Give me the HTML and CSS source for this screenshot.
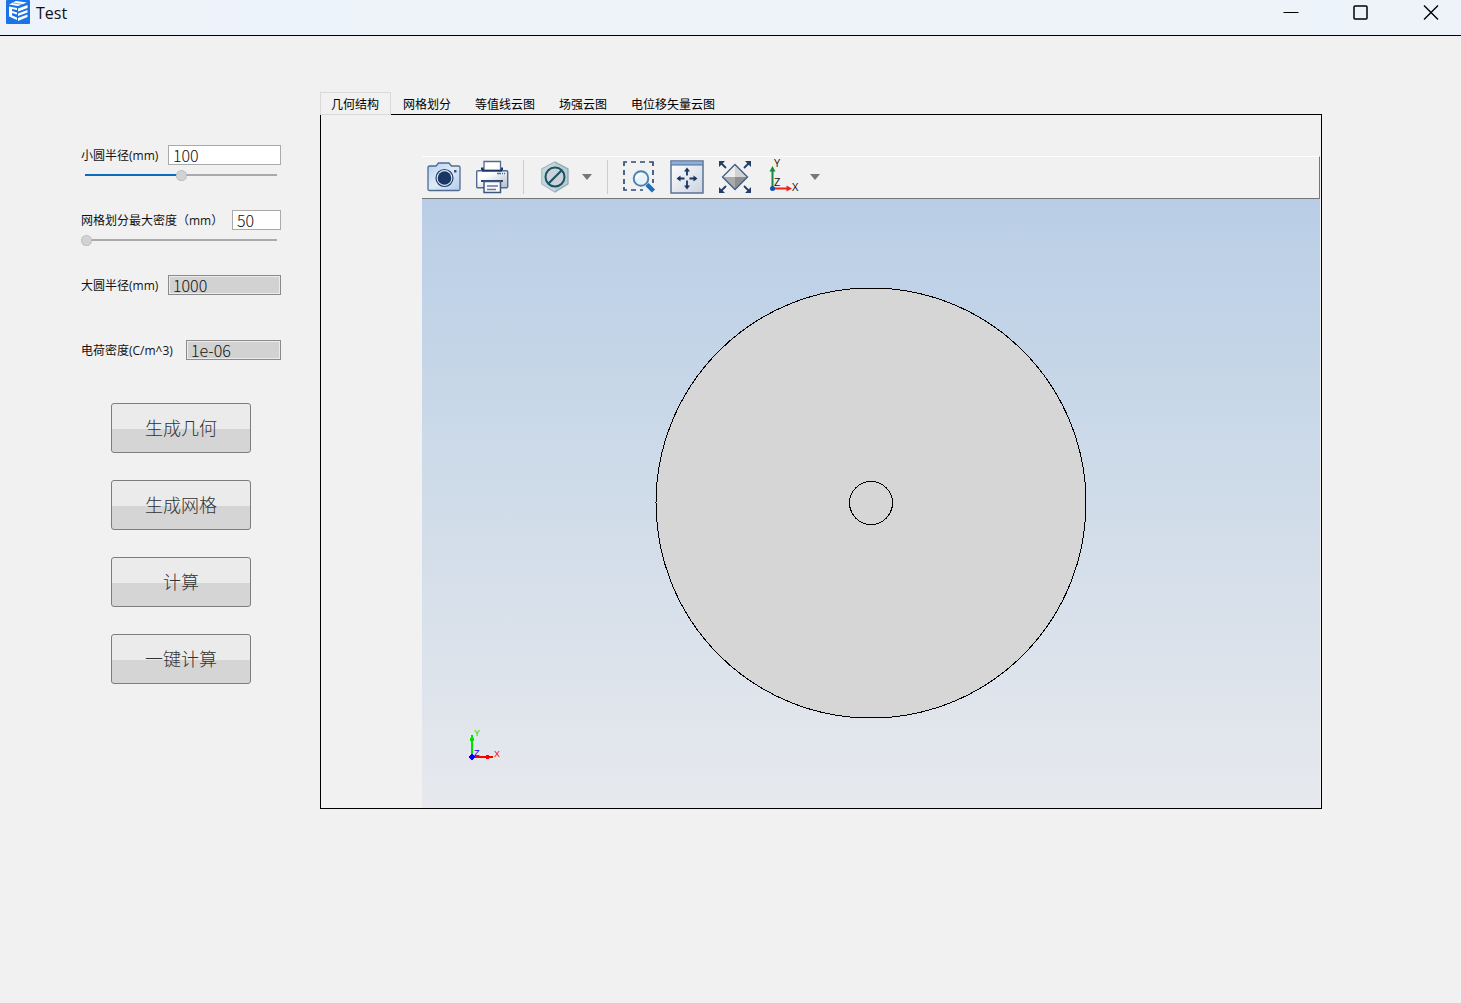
FILE: index.html
```html
<!DOCTYPE html>
<html lang="zh-CN">
<head>
<meta charset="utf-8">
<title>Test</title>
<link rel="stylesheet" href="styles.css">
</head>
<body>
<header class="titlebar">
  <svg class="app-icon" viewBox="0 0 24 24" aria-hidden="true">
    <rect width="24" height="24" rx="1" fill="#1b73e8"/>
    <path d="M3 4.500 10 1 21 2.500 12 6Z" fill="#fff"/>
    <path d="M3 6.500 11 8V10L6 9V11L11 12.500V14.500L6 13V15.500L11 17.500V20L3 16.500Z" fill="#fff"/>
    <path d="M12 8.500 21.500 5V8L12 11.500ZM12 13.500 21.500 10V12.500L12 16ZM12 18 21.500 14.500V17L12 21Z" fill="#fff"/>
    <path d="M7 3 17 4.500" stroke="#1b73e8" stroke-width=".6"/>
  </svg>
  <h1 class="title">Test</h1>
  <div class="window-controls">
    <button class="window-button" type="button" aria-label="最小化"><svg viewBox="0 0 16 24"><path d="M0.500 12.500H15.500"/></svg></button>
    <button class="window-button" type="button" aria-label="最大化"><svg viewBox="0 0 16 24"><rect x="1" y="6" width="13" height="13" rx="1" stroke-width="1.500"/></svg></button>
    <button class="window-button" type="button" aria-label="关闭"><svg viewBox="0 0 16 24"><path d="M1 5.500 15 19.500M15 5.500 1 19.500" stroke-width="1.400"/></svg></button>
  </div>
</header>
<main class="workspace">
  <form class="sidebar">
    <div class="fields">
      <div class="field">
        <div class="field-row"><label for="inner">小圆半径(mm)</label><input class="value" id="inner" type="text" value="100"></div>
        <input class="slider slider-half" type="range" min="0" max="200" value="101" aria-label="小圆半径">
      </div>
      <div class="field">
        <div class="field-row"><label for="mesh">网格划分最大密度（mm）</label><input class="value value-short" id="mesh" type="text" value="50"></div>
        <input class="slider" type="range" min="50" max="200" value="50" aria-label="网格划分最大密度">
      </div>
      <div class="field">
        <div class="field-row"><label for="outer">大圆半径(mm)</label><input class="value" id="outer" type="text" value="1000" readonly></div>
      </div>
      <div class="field">
        <div class="field-row"><label for="charge">电荷密度(C/m^3)</label><input class="value value-medium" id="charge" type="text" value="1e-06" readonly></div>
      </div>
    </div>
    <div class="actions">
      <button class="action" type="button">生成几何</button>
      <button class="action" type="button">生成网格</button>
      <button class="action" type="button">计算</button>
      <button class="action" type="button">一键计算</button>
    </div>
  </form>
  <section class="results">
    <div class="tabs" role="tablist">
      <button class="tab tab-active" type="button" role="tab" aria-selected="true">几何结构</button>
      <button class="tab" type="button" role="tab">网格划分</button>
      <button class="tab" type="button" role="tab">等值线云图</button>
      <button class="tab" type="button" role="tab">场强云图</button>
      <button class="tab" type="button" role="tab">电位移矢量云图</button>
    </div>
    <div class="panel" role="tabpanel">
      <div class="viewer">
        <div class="toolbar" role="toolbar">
          <button class="tool" type="button" aria-label="截图"><svg viewBox="0 0 34 34">
            <defs><linearGradient id="cam" x2="1" y2="1"><stop offset="0" stop-color="#b2d0ef"/><stop offset=".5" stop-color="#dfeaf7"/><stop offset="1" stop-color="#b2cce9"/></linearGradient></defs>
            <path d="M2.500 6H9L11.500 3H22L24.500 6H31.500Q33 6 33 7.500V29Q33 30.500 31.500 30.500H2.500Q1 30.500 1 29V7.500Q1 6 2.500 6Z" fill="url(#cam)" stroke="#526b92" stroke-width="1.300"/>
            <circle cx="17.500" cy="18" r="8.500" fill="#e5edf6" stroke="#223f70" stroke-width="1.200"/><circle cx="17.500" cy="18" r="6.800" fill="#193563"/><rect x="27" y="10" width="2.500" height="2.500" fill="#38547f"/></svg></button>
          <button class="tool" type="button" aria-label="打印"><svg viewBox="0 0 34 34">
            <defs><linearGradient id="prn" x2="1" y2="1"><stop offset=".3" stop-color="#fff"/><stop offset="1" stop-color="#b0bac9"/></linearGradient></defs>
            <path d="M6 7.500H28V11H6Z" fill="#193563"/><path d="M9 1.500H25.500V10.500H9Z" fill="#fff" stroke="#526b92" stroke-width="1.300"/>
            <rect x="1.700" y="10.700" width="31" height="17" rx="1" fill="url(#prn)" stroke="#526b92" stroke-width="1.400"/><path d="M7 10.700H27" stroke="#193563" stroke-width="1.800"/>
            <path d="M6 21H28" stroke="#193563" stroke-width="1.800"/><path d="M9 21.500H25.500V32.500H9Z" fill="#f7f9fc" stroke="#3e577f" stroke-width="1.500"/><path d="M12 26H23M12 29.500H21" stroke="#687892" stroke-width="1.500"/><path d="M22 13.500H30" stroke="#526b92" stroke-width="1.500" stroke-dasharray="4 1 1 1"/></svg></button>
          <span class="separator"></span>
          <div class="split">
            <button class="tool" type="button" aria-label="隐藏"><svg viewBox="0 0 34 34">
              <path d="M17 2 30 9V24L17 32 4 24V9Z" fill="#b9ccd2" stroke="#8fa9b3" stroke-width="1.300"/><path d="M17 2V32L4 24V9Z" fill="#cbdce0" opacity=".7"/><circle cx="17" cy="17" r="9.500" fill="#cbd2d8" stroke="#195264" stroke-width="2"/><path d="M10.500 23.500 23.500 10.500" stroke="#195264" stroke-width="2.200"/></svg></button>
            <button class="drop" type="button" aria-label="显示选项"><svg viewBox="0 0 12 8"><path d="M1 1H11L6 7Z" fill="#777"/></svg></button>
          </div>
          <span class="separator"></span>
          <button class="tool" type="button" aria-label="框选缩放"><svg viewBox="0 0 34 34" fill="none">
            <path d="M2 6V2H5M9 2H14M18 2H23M27 2H31V6M2 10V15M2 19V24M2 27V30H5M31 10V15M31 19V23M9 30H14M18 30H21" stroke="#304b78" stroke-width="1.700"/><path d="M25 24.500 31.500 31" stroke="#1d70b6" stroke-width="4.500"/><circle cx="19" cy="18.500" r="7.300" fill="#e8f2fb" stroke="#4682b3" stroke-width="1.900"/><path d="M15 18.500Q15 14 19.500 14" stroke="#fff" stroke-width="2"/></svg></button>
          <button class="tool" type="button" aria-label="平移"><svg viewBox="0 0 34 34">
            <defs><linearGradient id="pan" x2="1" y2="1"><stop offset="0" stop-color="#fff"/><stop offset="1" stop-color="#cbd3e0"/></linearGradient></defs>
            <rect x="1" y="1" width="32" height="32" fill="url(#pan)" stroke="#5a7198" stroke-width="1.500"/><path d="M2 1.800H32V5H2Z" fill="#8faed4"/><path d="M1 5H33" stroke="#526b92"/>
            <path d="M17 9V15.500M17 20.500V28M8 18.500H14.500M19.500 18.500H26" stroke="#193563" stroke-width="1.800"/><path d="M17 7.500 20 11.500H14ZM17 29.500 20 25.500H14ZM6.500 18.500 10.500 15.500V21.500ZM27.500 18.500 23.500 15.500V21.500Z" fill="#193563"/></svg></button>
          <button class="tool" type="button" aria-label="适应窗口"><svg viewBox="0 0 34 34">
            <path d="M17 4.500 29.500 17 17 29.500 4.500 17Z" fill="#ededed"/><path d="M17 4.500 29.500 17H17Z" fill="#d2d2d2"/><path d="M4.500 17H17V29.500Z" fill="#aaa"/><path d="M17 17H29.500L17 29.500Z" fill="#8f8f8f"/><path d="M17 4.500 29.500 17 17 29.500 4.500 17Z" fill="none" stroke="#405b87" stroke-width="1.300"/>
            <path d="M3 3 8 8M31 3 26 8M3 31 8 26M31 31 26 26" stroke="#243e6a" stroke-width="1.800"/><path d="M1 1H7L1 7ZM33 1H27L33 7ZM1 33H7L1 27ZM33 33H27L33 27Z" fill="#243e6a"/></svg></button>
          <div class="split">
            <button class="tool" type="button" aria-label="视图方向"><svg viewBox="0 0 34 34">
              <path d="M6.500 28V10" stroke="#168b3d" stroke-width="2"/><path d="M6.500 6 9.500 11.500H3.500Z" fill="#168b3d"/><path d="M7 28.500H21" stroke="#ed251c" stroke-width="2"/><path d="M26 28.500 20.500 25.500V31.500Z" fill="#ed251c"/><circle cx="6.500" cy="28.500" r="2.500" fill="#194fae"/>
              <g class="axis-text"><text x="8" y="7">Y</text><text x="8" y="26">Z</text><text x="26" y="31">X</text></g></svg></button>
            <button class="drop" type="button" aria-label="视图选项"><svg viewBox="0 0 12 8"><path d="M1 1H11L6 7Z" fill="#777"/></svg></button>
          </div>
        </div>
        <div class="canvas">
          <svg class="geometry" viewBox="0 0 432 432" fill="#d6d6d6" stroke="#000" shape-rendering="crispEdges"><circle cx="216" cy="216" r="215"/><circle cx="216" cy="216" r="21.500"/></svg>
          <svg class="triad" viewBox="0 0 40 40">
            <g shape-rendering="crispEdges"><path d="M9 33V11H11V33Z" fill="#00e000"/><rect x="8" y="14" width="4" height="3" fill="#00e000"/><path d="M10 32H31V34H10Z" fill="red"/><rect x="24" y="31" width="3" height="4" fill="red"/><path d="M10 30 13 33 10 36 7 33Z" fill="#00f" stroke="#00f"/></g>
            <g class="triad-text"><text x="12" y="12" fill="#00e000">Y</text><text x="12" y="32" fill="#00f">Z</text><text x="32" y="33" fill="red">X</text></g>
          </svg>
        </div>
      </div>
    </div>
  </section>
</main>
</body>
</html>
```

FILE: styles.css
```css
* { box-sizing: border-box; }
body {
  margin: 0;
  min-height: 100vh;
  background: #f1f1f1;
  color: #111;
  font: 12px/22px "Open Sans", "Noto Sans CJK SC", sans-serif;
}
button, input { font: inherit; color: inherit; margin: 0; padding: 0; }
button { border: 0; background: none; }
svg { display: block; }

.titlebar {
  display: flex;
  align-items: flex-start;
  height: 36px;
  padding-left: 6px;
  border-bottom: 1px solid #000;
  background: linear-gradient(90deg, #eef3fb, #edf3f8 70%, #eef3fb);
}
.app-icon { width: 24px; height: 24px; }
.title { margin: 0 auto 0 6px; font-size: 16px; font-weight: 400; line-height: 26px; }
.window-controls { display: flex; gap: 10px; }
.window-button { display: flex; justify-content: center; width: 60px; }
.window-button svg { width: 16px; height: 24px; fill: none; stroke: #000; }

.workspace { display: flex; gap: 39px; padding: 56px 139px 56px 81px; }
.sidebar { flex: none; width: 200px; padding-top: 53px; }
.fields { display: flex; flex-direction: column; gap: 29px; }
.field { display: flex; flex-direction: column; gap: 5px; min-height: 36px; }
.field-row { display: flex; justify-content: space-between; height: 20px; white-space: nowrap; }
.value {
  width: 113px;
  padding: 0 0 0 4px;
  border: 1px solid #aaa;
  border-radius: 0;
  background: #fff;
  font: 300 16px/18px "Noto Sans CJK SC", sans-serif;
}
.value-medium { width: 95px; }
.value-short { width: 49px; }
.value:read-only { border-color: #8a8a8a; background: #d2d2d2; box-shadow: inset 0 0 0 1px #ececec; }
.slider {
  appearance: none;
  width: 100%;
  height: 11px;
  background: linear-gradient(#aaa, #aaa) center 4px / 192px 2px no-repeat;
}
.slider-half { background-image: linear-gradient(90deg, #0a6cbd 50%, #aaa 50%); }
.slider::-webkit-slider-thumb {
  appearance: none;
  width: 11px;
  height: 11px;
  border: 1px dotted #aaa;
  border-radius: 50%;
  background: #d2d2d2;
}

.actions { display: flex; flex-direction: column; gap: 27px; margin-top: 27px; padding: 0 30px; }
.action {
  height: 50px;
  padding-bottom: 3px;
  border: 1px solid #7d7d7d;
  border-radius: 3px;
  background: linear-gradient(#ebebeb 52%, #d5d5d5 52%);
  color: #333;
  font: 300 18px/24px "Noto Sans CJK SC", sans-serif;
}

.results { flex: 1; min-width: 0; }
.tabs { display: flex; gap: 1px; }
.tab {
  height: 23px;
  margin-bottom: -1px;
  padding: 1px 11px 0 10px;
  border: 1px solid transparent;
  color: #000;
  white-space: nowrap;
}
.tab-active { z-index: 1; border-color: #d9d9d9; background: #f1f1f1; }
.panel { padding: 41px 1px 0 101px; border: 1px solid #000; }
.toolbar {
  display: flex;
  align-items: center;
  gap: 14px;
  padding: 3px 0 4px 5px;
  border: solid #777;
  border-width: 1px 1px 1px 0;
  border-top-color: #fff;
}
.split { display: flex; align-items: center; gap: 9px; }
.tool, .tool svg { width: 34px; height: 34px; }
.tool svg { overflow: visible; }
.drop, .drop svg { width: 12px; height: 8px; }
.separator { width: 1px; height: 34px; background: #ccc; }
.axis-text { font: 11px "Open Sans", sans-serif; fill: #111; }
.canvas {
  position: relative;
  display: flex;
  align-items: center;
  justify-content: center;
  min-height: 609px;
  padding-bottom: 2px;
  background: linear-gradient(#b9cee6, #d0dce9 50%, #e7e9ee);
}
.geometry { width: 432px; height: 432px; }
.triad { position: absolute; left: 40px; bottom: 44px; width: 40px; height: 40px; overflow: visible; }
.triad-text { font: 9px "Liberation Sans", sans-serif; }
```
